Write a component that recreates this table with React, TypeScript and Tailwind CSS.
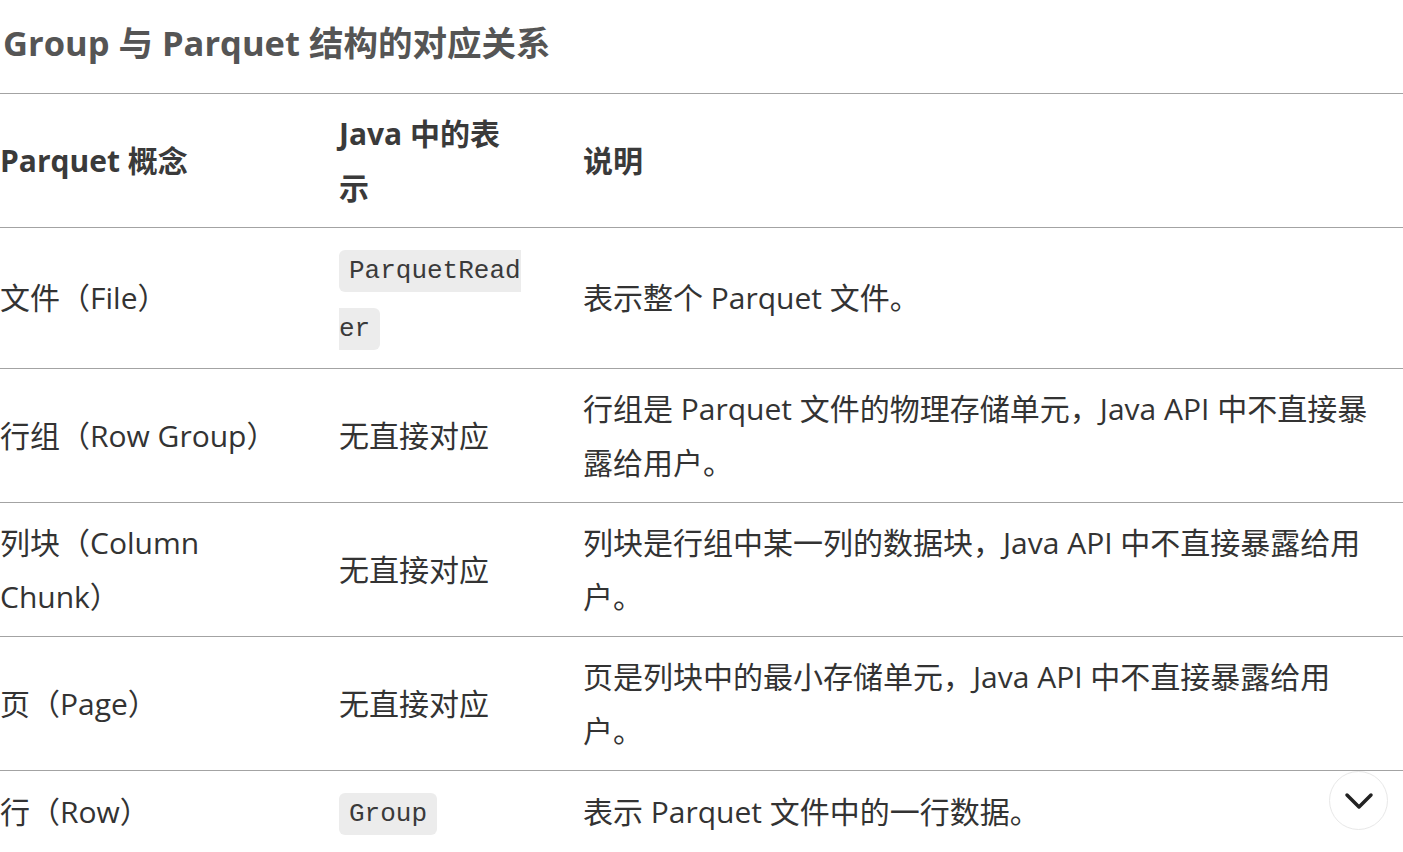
const sans = "font-['Open_Sans','Noto_Sans_CJK_SC',sans-serif]";

/* ── inline code chip ── */
const Code = ({ children }: { children: string }) => (
  <code className="rounded-[6px] bg-[#ececec] px-[10px] py-[6px] font-['Liberation_Mono',monospace] text-[26px] text-[#3a3a3a] [box-decoration-break:slice] break-all">
    {children}
  </code>
);

type Row = { concept: string; java: React.ReactNode; desc: string };

const rows: Row[] = [
  { concept: "文件（File）", java: <Code>ParquetReader</Code>, desc: "表示整个 Parquet 文件。" },
  { concept: "行组（Row Group）", java: "无直接对应", desc: "行组是 Parquet 文件的物理存储单元，Java API 中不直接暴露给用户。" },
  { concept: "列块（Column Chunk）", java: "无直接对应", desc: "列块是行组中某一列的数据块，Java API 中不直接暴露给用户。" },
  { concept: "页（Page）", java: "无直接对应", desc: "页是列块中的最小存储单元，Java API 中不直接暴露给用户。" },
  { concept: "行（Row）", java: <Code>Group</Code>, desc: "表示 Parquet 文件中的一行数据。" },
];

export default function App() {
  return (
    <div className={`relative h-[852px] w-[1403px] overflow-hidden bg-white ${sans} text-[#333]`}>
      <h3 className="pt-[19px] pl-[3px] text-[34.5px] font-bold leading-[48px] text-[#555]">
        Group 与 Parquet 结构的对应关系
      </h3>

      <table className="mt-[26px] w-[1429px] table-fixed border-collapse text-[30px] leading-[54px]">
        <colgroup>
          <col className="w-[339px]" />
          <col className="w-[244px]" />
          <col className="w-[846px]" />
        </colgroup>
        <thead>
          <tr className="border-y border-[#a3a3a3] text-left font-bold text-[#3a3a3a]">
            <th className="py-[12.5px] pr-[56px] align-middle">Parquet 概念</th>
            <th className="py-[12.5px] pr-[56px] align-middle">Java 中的表示</th>
            <th className="py-[12.5px] pr-[56px] align-middle">说明</th>
          </tr>
        </thead>
        <tbody>
          {rows.map((r) => (
            <tr key={r.concept} className="border-b border-[#a3a3a3]">
              <td className="py-[12.5px] pr-[56px] align-middle">{r.concept}</td>
              <td className="py-[12px] pr-[56px] align-middle">{r.java}</td>
              <td className="py-[12.5px] pr-[56px] align-middle">{r.desc}</td>
            </tr>
          ))}
        </tbody>
      </table>

      {/* scroll-to-bottom button */}
      <button className="absolute left-[1329px] top-[771px] flex h-[59px] w-[59px] items-center justify-center rounded-full border border-[#e8e8e8] bg-white">
        <svg width="30" height="18" viewBox="0 0 30 18" fill="none">
          <polyline points="3,3 15,15 27,3" stroke="#222" strokeWidth="3.5" strokeLinecap="round" strokeLinejoin="round" />
        </svg>
      </button>
    </div>
  );
}
